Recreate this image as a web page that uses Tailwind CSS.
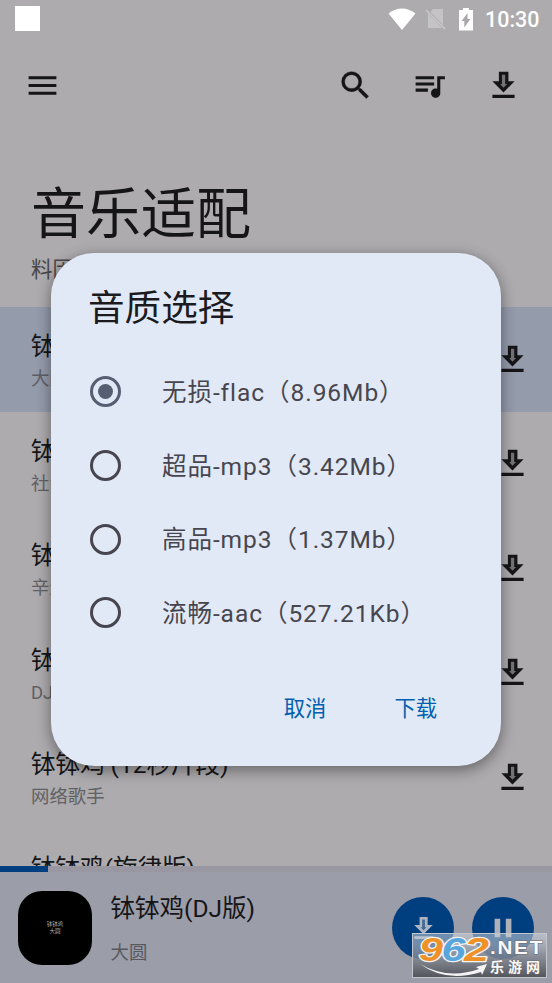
<!DOCTYPE html>
<html lang="zh-CN">
<head>
<meta charset="utf-8">
<title>音乐适配</title>
<script src="https://cdn.jsdelivr.net/npm/@tailwindcss/browser@4"></script>
</head>
<body class="bg-[#adabad]">
<svg class="hidden">
  <symbol id="dl" viewBox="0 0 24 24"><path d="M19.200 9.200H15.200V3H9v6.200H4.800l7.200 7.300z"/><path d="M11 5h2.100v6h1.200L12 13.400 9.800 11H11z" fill="#737274"/><path d="M4.800 18h14.400v2.100H4.800z"/></symbol>
</svg>
<div class="relative w-[552px] h-[983px] overflow-hidden bg-[#adabad] text-[#151518] font-[Roboto,'Noto_Sans_CJK_SC',sans-serif] flex flex-col">
  <!-- Status bar -->
  <div class="h-[37px] shrink-0 flex items-center pl-[15px] pr-[12px]">
    <div class="size-[25px] bg-white"></div>
    <svg class="ml-auto w-[28px] h-[24px]" viewBox="0 0 28 24" fill="#fff"><path d="M0.500 6.500Q14 -3.500 27.500 6.500L14 23z"/></svg>
    <svg class="ml-[9px] w-[21px] h-[24px]" viewBox="0 0 21 24"><path d="M8 2h10v16L5.500 5zM3 6.500v14.500h14z" fill="#c4c3c5"/><path d="M1 3l19 19" stroke="#c9c8ca" stroke-width="1.600"/></svg>
    <svg class="ml-[12px] w-[16px] h-[24px]" viewBox="0 0 16 24"><path d="M5 1h6v2h4v20.500H1V3h4z" fill="#fff"/><path d="M9.500 6v6h3L6.300 20.500V14H3.600z" fill="#a9a7a9"/></svg>
    <div class="ml-[11px] mt-[2px] w-[55px] text-[21.5px] leading-6 font-medium text-white whitespace-nowrap">10:30</div>
  </div>
  <!-- App bar -->
  <div class="h-[97px] shrink-0 flex items-center pl-[24px] pr-[30.500px]">
    <svg class="size-[37px]" viewBox="0 0 24 24" fill="#151518"><path d="M3 6h18v2H3zM3 11h18v2H3zM3 16h18v2H3z"/></svg>
    <svg class="ml-auto size-[37px]" viewBox="0 0 24 24" fill="#151518" stroke="#151518" stroke-width=".25"><path d="M15.500 14h-.79l-.28-.27A6.471 6.471 0 0 0 16 9.500 6.500 6.500 0 1 0 9.500 16c1.610 0 3.090-.59 4.230-1.570l.27.28v.79l5 4.990L20.490 19zm-6 0C7.010 14 5 11.990 5 9.500S7.010 5 9.500 5 14 7.010 14 9.500 11.990 14 9.500 14z"/></svg>
    <svg class="ml-[37px] size-[37px]" viewBox="0 0 24 24" fill="#151518"><path d="M15 6H3v2h12zm0 4H3v2h12zM3 16h8v-2H3zM17 6v8.180c-.31-.11-.65-.18-1-.18-1.660 0-3 1.340-3 3s1.340 3 3 3 3-1.340 3-3V8h3V6z"/></svg>
    <svg class="ml-[36.500px] size-[37px]" fill="#151518"><use href="#dl"/></svg>
  </div>
  <!-- Heading -->
  <div class="h-[173px] shrink-0 pl-[31px] pt-[46px]">
    <div class="text-[55px] leading-[69px] h-[74px]">音乐适配</div>
    <div class="text-[21.5px] leading-[31px] text-[#48474b]">料因</div>
  </div>
  <!-- Track list -->
  <div class="h-[559px] shrink-0 overflow-hidden">
    <div class="h-[104.500px] bg-[#949bab] flex items-center pl-[31px] pr-[21px]">
      <div class="grow pt-[3px]"><div class="text-[24.500px] leading-[37px]">钵钵鸡(DJ版)</div><div class="text-[18.400px] leading-[28px] text-[#5c5e66]">大圆</div></div>
      <svg class="size-[37px]" fill="#151518"><use href="#dl"/></svg>
    </div>
    <div class="h-[104.500px] flex items-center pl-[31px] pr-[21px]">
      <div class="grow pt-[3px]"><div class="text-[24.500px] leading-[37px]">钵钵鸡</div><div class="text-[18.400px] leading-[28px] text-[#626165]">社会</div></div>
      <svg class="size-[37px]" fill="#151518"><use href="#dl"/></svg>
    </div>
    <div class="h-[104.500px] flex items-center pl-[31px] pr-[21px]">
      <div class="grow pt-[3px]"><div class="text-[24.500px] leading-[37px]">钵钵鸡</div><div class="text-[18.400px] leading-[28px] text-[#626165]">辛迪</div></div>
      <svg class="size-[37px]" fill="#151518"><use href="#dl"/></svg>
    </div>
    <div class="h-[104.500px] flex items-center pl-[31px] pr-[21px]">
      <div class="grow pt-[3px]"><div class="text-[24.500px] leading-[37px]">钵钵鸡</div><div class="text-[18.400px] leading-[28px] text-[#626165]">DJ</div></div>
      <svg class="size-[37px]" fill="#151518"><use href="#dl"/></svg>
    </div>
    <div class="h-[104.500px] flex items-center pl-[31px] pr-[21px]">
      <div class="grow pt-[3px]"><div class="text-[24.500px] leading-[37px]">钵钵鸡 (12秒片段)</div><div class="text-[18.400px] leading-[28px] text-[#626165]">网络歌手</div></div>
      <svg class="size-[37px]" fill="#151518"><use href="#dl"/></svg>
    </div>
    <div class="h-[104.500px] flex items-center pl-[31px] pr-[21px]">
      <div class="grow pt-[2px]"><div class="text-[24.500px] leading-[37px]">钵钵鸡(旋律版)</div><div class="text-[18.400px] leading-[28px] text-[#626165]">网络歌手</div></div>
      <svg class="size-[37px]" fill="#151518"><use href="#dl"/></svg>
    </div>
  </div>
  <!-- Player -->
  <div class="h-[117px] shrink-0 bg-[#9b9da9]">
    <div class="h-[6px] bg-[#9998a2]"><div class="h-full w-[48px] bg-[#003f7f]"></div></div>
    <div class="h-[111px] flex items-start pl-[18px] pr-[18px]">
      <div class="mt-[19px] size-[74px] rounded-[24px] bg-black text-[#b0b0b0] text-[5.500px] leading-[7px] flex flex-col items-center justify-center"><span>钵钵鸡</span><span>大圆</span></div>
      <div class="ml-[18.500px] pt-[18px]"><div class="text-[24.500px] leading-[37px]">钵钵鸡(DJ版)</div><div class="mt-[12px] text-[18.400px] leading-[28px] text-[#58595f]">大圆</div></div>
      <div class="ml-auto mt-[25px] flex gap-[18px]">
        <div class="size-[62px] rounded-full bg-[#003f7f] flex items-center justify-center"><svg class="size-[31px]" viewBox="0 0 24 24" fill="#adb5c4"><path d="M19.200 9.200H15.200V3H9v6.200H4.800l7.200 7.300z"/><path d="M11 5h2.100v6h1.200L12 13.400 9.800 11H11z" fill="#426994"/><path d="M4.800 18h14.400v2.100H4.800z"/></svg></div>
        <div class="size-[62px] rounded-full bg-[#003f7f] flex items-center justify-center"><svg class="size-[32px]" viewBox="0 0 24 24" fill="#adb0b8"><path d="M5.700 19h4.200V5H5.700zM14.100 5v14h4.200V5z"/></svg></div>
      </div>
    </div>
  </div>

  <!-- Quality dialog -->
  <div class="absolute left-[51px] top-[253px] w-[450px] h-[513px] rounded-[43px] bg-[#e2e9f6] shadow-[0_4px_14px_1px_rgba(0,0,0,0.38)] px-[37px] pt-[28px] flex flex-col text-[#47464f]">
    <div class="text-[36.600px] leading-[56px] h-[74px] text-[#1b1b1f]">音质选择</div>
    <div class="flex flex-col text-[24.500px] tracking-[0.95px] whitespace-nowrap">
      <div class="h-[73.700px] flex items-center gap-[41px]"><div class="ml-[2px] size-[31px] rounded-full border-[3px] border-[#565e71] flex items-center justify-center"><div class="size-[15px] rounded-full bg-[#565e71]"></div></div><span class="pt-[3px]">无损-flac（8.96Mb）</span></div>
      <div class="h-[73.700px] flex items-center gap-[41px]"><div class="ml-[2px] size-[31px] rounded-full border-[3px] border-[#47464f]"></div><span class="pt-[3px]">超品-mp3（3.42Mb）</span></div>
      <div class="h-[73.700px] flex items-center gap-[41px]"><div class="ml-[2px] size-[31px] rounded-full border-[3px] border-[#47464f]"></div><span class="pt-[3px]">高品-mp3（1.37Mb）</span></div>
      <div class="h-[73.700px] flex items-center gap-[41px]"><div class="ml-[2px] size-[31px] rounded-full border-[3px] border-[#47464f]"></div><span class="pt-[3px]">流畅-aac（527.21Kb）</span></div>
    </div>
    <div class="mt-[43px] flex justify-end gap-[68px] pr-[27px] text-[21.300px] leading-[32px] text-[#005faf]"><span>取消</span><span>下载</span></div>
  </div>

  <!-- Site badge -->
  <svg class="absolute left-[412px] top-[933px] w-[135px] h-[45px]" viewBox="0 0 135 45">
    <defs><linearGradient id="g" x1="0" y1="0" x2="0" y2="1"><stop offset="0" stop-color="#d5dce5" stop-opacity=".5"/><stop offset=".45" stop-color="#8c929d" stop-opacity=".8"/><stop offset="1" stop-color="#4e5055" stop-opacity=".95"/></linearGradient></defs>
    <rect x=".5" y=".5" width="134" height="44" fill="url(#g)" stroke="#c4c6cb"/>
    <path d="M8 31Q36 47 67 36l-3-2 11-3-5 11-1-3Q34 50 8 31z" fill="#f4f4f4"/>
    <g font-family="Liberation Sans" font-weight="bold" font-style="italic" font-size="34" stroke="#f3f3f3" stroke-width="2.500" paint-order="stroke" stroke-linejoin="round">
      <text x="7" y="28" textLength="24" lengthAdjust="spacingAndGlyphs" fill="#ee9127">9</text>
      <text x="29.500" y="28" textLength="24" lengthAdjust="spacingAndGlyphs" fill="#58a6dc">6</text>
      <text x="52" y="28" textLength="25" lengthAdjust="spacingAndGlyphs" fill="#ee9127">2</text>
    </g>
    <g fill="#fafafa" stroke="#6b6e75" stroke-width="1" paint-order="stroke" font-weight="bold">
      <text x="78" y="21" font-family="Liberation Sans" font-size="18" textLength="54" lengthAdjust="spacingAndGlyphs" letter-spacing="1.500">.NET</text>
      <text x="78" y="39" font-family="Noto Sans CJK SC" font-size="14" letter-spacing="4">乐游网</text>
    </g>
  </svg>
</div>
</body>
</html>
